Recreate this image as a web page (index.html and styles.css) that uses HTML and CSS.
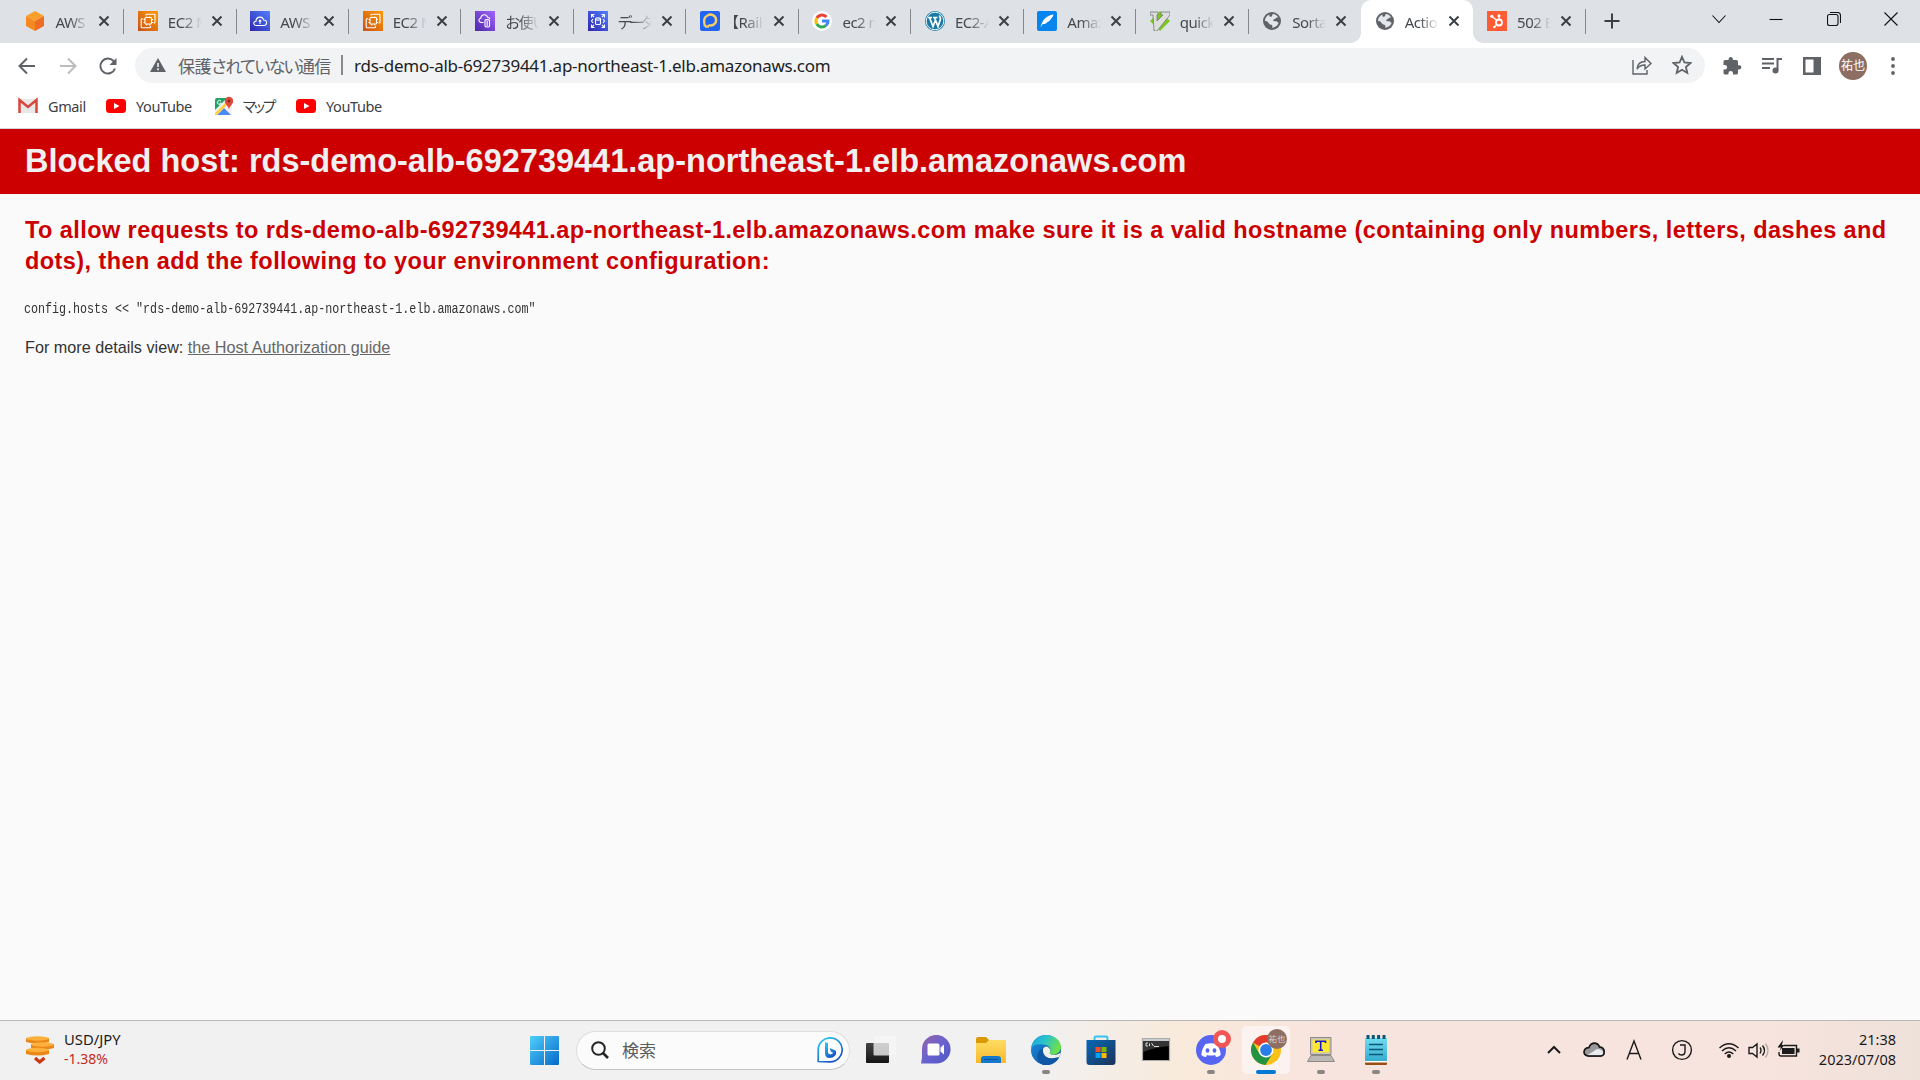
FILE: index.html
```html
<!DOCTYPE html>
<html lang="ja">
<head>
<meta charset="utf-8">
<title>Action Controller: Exception caught</title>
<link rel="stylesheet" href="styles.css">
</head>
<body>
<svg class="defs" aria-hidden="true">
  <defs>
    <linearGradient id="orange" x1="0" y1="1" x2="1" y2="0"><stop offset="0" stop-color="#c8511b"/><stop offset="1" stop-color="#f90"/></linearGradient>
    <linearGradient id="blue" x1="0" y1="1" x2="1" y2="0"><stop offset="0" stop-color="#2e27ad"/><stop offset="1" stop-color="#527fff"/></linearGradient>
    <linearGradient id="purple" x1="0" y1="1" x2="1" y2="0"><stop offset="0" stop-color="#4d27a8"/><stop offset="1" stop-color="#a166ff"/></linearGradient>
    <linearGradient id="win" x1="0" y1="0" x2="1" y2="1"><stop offset="0" stop-color="#4fd0fb"/><stop offset="1" stop-color="#0669c9"/></linearGradient>
    <linearGradient id="chat" x1="0" y1="0" x2="1" y2="1"><stop offset="0" stop-color="#9a64a8"/><stop offset=".5" stop-color="#6a62cf"/><stop offset="1" stop-color="#4d57c4"/></linearGradient>
    <linearGradient id="folder" x1="0" y1="0" x2="0" y2="1"><stop offset="0" stop-color="#ffdc62"/><stop offset="1" stop-color="#f8b92e"/></linearGradient>
    <linearGradient id="edgeA" x1="0" y1="0" x2="1" y2=".4"><stop offset="0" stop-color="#1b9de2"/><stop offset=".5" stop-color="#2cc3c9"/><stop offset="1" stop-color="#6be04b"/></linearGradient>
    <linearGradient id="edgeB" x1="0" y1="0" x2="1" y2="1"><stop offset="0" stop-color="#1a8fe0"/><stop offset="1" stop-color="#0c4f9c"/></linearGradient>
    <linearGradient id="store" x1="0" y1="0" x2="1" y2="1"><stop offset="0" stop-color="#0669b5"/><stop offset="1" stop-color="#1d3258"/></linearGradient>
    <linearGradient id="bing" x1="0" y1="0" x2=".6" y2="1"><stop offset="0" stop-color="#28d3f3"/><stop offset="1" stop-color="#1851c8"/></linearGradient>
    <linearGradient id="pad" x1="0" y1="0" x2="0" y2="1"><stop offset="0" stop-color="#6fdcf0"/><stop offset="1" stop-color="#37acd0"/></linearGradient>
    <linearGradient id="dark" x1="0" y1="0" x2="0" y2="1"><stop offset="0" stop-color="#444"/><stop offset="1" stop-color="#151515"/></linearGradient>
    <symbol id="ec2" viewBox="0 0 20 20"><path fill="url(#orange)" d="M0 0h20v20H0z"/><g fill="none" stroke="#fff" stroke-width="1.1"><rect x="7" y="6.500" width="6.500" height="6.500" rx=".8"/><path d="M8 4.500V4q0-.8.800-.8h7.400q.8 0 .8.800v7.200q0 .8-.8.800H15.500M12.500 15v1q0 .8-.8.800H4q-.8 0-.8-.8V8.600q0-.8.800-.8h1M8.700 6.500v-1M11.700 6.500v-1M8.700 13v1.500M11.700 13v1.500M7 8.500H5.500M7 11.500H5.500M13.500 8.500H15M13.500 11.500H15"/></g></symbol>
    <symbol id="globe" viewBox="0 0 20 20"><circle cx="10" cy="10" r="9" fill="#5f6368"/><path fill="#e4e6ea" d="M10.500 3.100c2.600.1 4.700 1.600 5.800 3.700-1.300-.5-2.100 0-3 .9-.7.600-1.900.4-2.100 1.500.3 1.300 1.900.9 3 1.100 1.500.3 1.100 1.500 2.500 1.400-1 2.800-3.600 4.900-6.700 5 .3-.7.500-1.300.4-2-.4-1.100-1.700-.9-2.700-1.500C6.400 12 6 10.800 4.800 10.300c-.7-.3-1.300-.4-1.900-.4C3 6.900 4.900 4.400 7.500 3.500c-.2 1.100-.2 2 .8 2.300 1.100.2 1.400-.6 1.900-1.400.2-.4.300-.8.300-1.300z"/></symbol>
    <symbol id="close" viewBox="0 0 12 12"><path d="M1.500 1.500l9 9M10.500 1.500l-9 9" stroke="#3c4043" stroke-width="2" fill="none"/></symbol>
    <symbol id="yt" viewBox="0 0 20 14"><rect width="20" height="14" rx="3.500" fill="red"/><path d="M8 4l5.500 3L8 10z" fill="#fff"/></symbol>
  </defs>
</svg>

<div class="tabs">
  <div class="tab"><svg class="fav" viewBox="0 0 20 20"><path fill="#f9a02c" d="M10 0l9 5-9 5-9-5z"/><path fill="#f68a20" d="M1 5l9 5v10l-9-5z"/><path fill="#ef6c26" d="M19 5l-9 5v10l9-5z"/></svg><span class="title">AWS</span><svg class="x"><use href="#close"/></svg></div>
  <div class="tab"><svg class="fav"><use href="#ec2"/></svg><span class="title">EC2 M</span><svg class="x"><use href="#close"/></svg></div>
  <div class="tab"><svg class="fav" viewBox="0 0 20 20"><path fill="url(#blue)" d="M0 0h20v20H0z"/><path d="M6.500 14.500C3 14.500 3 10.500 6 10.300 6 5.500 12.500 4.500 13.500 9c4-.3 4 5.500.5 5.500zM10 13v-3.500M8.700 10.500L10 9l1.300 1.500" fill="none" stroke="#fff" stroke-width="1.100"/></svg><span class="title">AWS</span><svg class="x"><use href="#close"/></svg></div>
  <div class="tab"><svg class="fav"><use href="#ec2"/></svg><span class="title">EC2 M</span><svg class="x"><use href="#close"/></svg></div>
  <div class="tab"><svg class="fav" viewBox="0 0 20 20"><path fill="url(#purple)" d="M0 0h20v20H0z"/><path d="M8.500 11.500H6c-3-.5-2.500-4-.2-4.300C6 3 11.500 2.500 12.500 6.200c1.500 0 2.300.8 2.500 1.800M10 9.500v5.500c0 1.300 4.500 1.300 4.500 0V9.500c0-1.200-4.500-1.200-4.500 0M12.200 10v5" fill="none" stroke="#fff" stroke-width="1.100"/></svg><span class="title kana">お使い</span><svg class="x"><use href="#close"/></svg></div>
  <div class="tab"><svg class="fav" viewBox="0 0 20 20"><path fill="url(#blue)" d="M0 0h20v20H0z"/><g fill="none" stroke="#fff" stroke-width="1.100"><path d="M3.500 6.500v-3h3M3.500 3.500L6 6M13.500 3.500h3v3M16.500 3.500L14 6M3.500 13.500v3h3M3.500 16.500L6 14M16.500 13.500v3h-3M16.500 16.500L14 14M5 8l-1.500 2L5 12M15 8l1.500 2L15 12"/><ellipse cx="10" cy="8" rx="2.500" ry="1.100"/><path d="M7.500 8v4.500c0 1.400 5 1.400 5 0V8"/></g></svg><span class="title katakana">データ</span><svg class="x"><use href="#close"/></svg></div>
  <div class="tab"><svg class="fav" viewBox="0 0 20 20"><rect width="20" height="20" rx="2" fill="#2264f2"/><path d="M5 15.500c-1.500-5-1-9.500 2.500-11A5.500 5.500 0 1 1 8.300 14M5 15.500h4" fill="none" stroke="#f5cf66" stroke-width="2.400"/></svg><span class="title"><span class="bracket">【</span>Rails</span><svg class="x"><use href="#close"/></svg></div>
  <div class="tab"><svg class="fav" viewBox="0 0 20 20"><circle cx="10" cy="10" r="10" fill="#fff"/><g fill="none" stroke-width="3"><path stroke="#ea4335" d="M4.800 7A6 6 0 0 1 14.500 6"/><path stroke="#fbbc05" d="M4.800 7a6 6 0 0 0 0 6"/><path stroke="#34a853" d="M4.800 13a6 6 0 0 0 9 1.700"/><path stroke="#4285f4" d="M10 10h6a6 6 0 0 1-2.200 4.700"/></g></svg><span class="title">ec2 m</span><svg class="x"><use href="#close"/></svg></div>
  <div class="tab"><svg class="fav" viewBox="0 0 20 20"><circle cx="10" cy="10" r="10" fill="#187aa5"/><circle cx="10" cy="10" r="8.800" fill="none" stroke="#fff" stroke-width=".9"/><path d="M3 6.500h4M8 6.500h4.500M4.500 6.500l3.500 9L10.500 9M9.500 6.500l3.500 9 2.500-7.500c.2-1.500-1-2-1-3.500" fill="none" stroke="#fff" stroke-width="1.700"/></svg><span class="title">EC2-A</span><svg class="x"><use href="#close"/></svg></div>
  <div class="tab"><svg class="fav" viewBox="0 0 20 20"><rect width="20" height="20" rx="2" fill="#0785ee"/><path d="M3.500 16.500C5 9.500 9 4.500 16.500 3.500c-.5 2-1.300 3-2.500 4l.3.300c-1.300 1.800-2.800 2.900-4.500 3.500l.3.400c-2 1.300-3.600 1.200-4.600 1.500z" fill="#fff"/></svg><span class="title">Amaz</span><svg class="x"><use href="#close"/></svg></div>
  <div class="tab"><svg class="fav" viewBox="0 0 20 20"><path d="M10 0l10 10-10 10L0 10z" fill="#7bc91f"/><path d="M0 1h8v3H7v6l6-6h-2V1h9v3L7 20H4L3 4H0z" fill="#ddd" stroke="#777" stroke-width=".8"/></svg><span class="title">quick</span><svg class="x"><use href="#close"/></svg></div>
  <div class="tab no-line"><svg class="fav"><use href="#globe"/></svg><span class="title">Sorta</span><svg class="x"><use href="#close"/></svg></div>
  <div class="tab active"><svg class="fav"><use href="#globe"/></svg><span class="title">Actio</span><svg class="x"><use href="#close"/></svg></div>
  <div class="tab"><svg class="fav" viewBox="0 0 20 20"><path fill="#ff5c35" d="M0 0h20v20H0z"/><g fill="none" stroke="#fff"><circle cx="12" cy="11.500" r="3" stroke-width="1.800"/><path stroke-width="1.300" d="M12 8.500V5M9.700 9.300L5 5.500M9.700 13.800L7.500 16"/></g><g fill="#fff"><circle cx="12" cy="4.800" r="1.500"/><circle cx="4.800" cy="5.200" r="1.500"/><circle cx="7.300" cy="16" r="1.200"/></g></svg><span class="title">502 B</span><svg class="x"><use href="#close"/></svg></div>
  <svg class="plus" viewBox="0 0 16 16"><path d="M8 .5v15M.5 8h15" stroke="#3c4043" stroke-width="2"/></svg>
  <div class="window-buttons">
    <svg viewBox="0 0 14 14"><path d="M.5 3.500L7 10.500l6.500-7"/></svg>
    <svg viewBox="0 0 14 14"><path d="M.5 7.500h13"/></svg>
    <svg viewBox="0 0 14 14"><rect x=".5" y="2.500" width="10.500" height="11" rx="2"/><path d="M3 .5h7.500q3 0 3 3V11"/></svg>
    <svg viewBox="0 0 14 14"><path d="M.5.500l13 13M13.500.5l-13 13"/></svg>
  </div>
</div>

<div class="toolbar">
  <svg class="nav" viewBox="0 0 20 20"><path d="M18 10H3M10 2.500L2.500 10l7.500 7.500"/></svg>
  <svg class="nav off" viewBox="0 0 20 20"><path d="M2 10h15M10 2.500l7.500 7.500-7.500 7.500"/></svg>
  <svg class="nav" viewBox="0 0 20 20"><path d="M17 12.500A7.500 7.500 0 1 1 15.500 5l1.500 2"/><path d="M18.500 2v7h-7z" fill="#5f6368" stroke="none"/></svg>
  <div class="omnibox">
    <svg class="warn" viewBox="0 0 16 14"><path d="M8 0l8 14H0z" fill="#5f6368"/><path d="M8 5v4M8 10.300v2" stroke="#f1f3f4" stroke-width="1.600"/></svg>
    <span class="insecure">保護<span class="tight">されていない</span>通信</span>
    <span class="bar"></span>
    <span class="url">rds-demo-alb-692739441.ap-northeast-1.elb.amazonaws.com</span>
    <svg class="share" viewBox="0 0 20 20"><path d="M1 5v14h14v-4M5 14c.5-5 3-7.500 8-7.500v-4l6 6-6 5.500v-4c-4 0-6 1-8 4z" fill="none" stroke="#5f6368" stroke-width="1.400"/></svg>
    <svg class="star" viewBox="0 0 20 20"><path d="M10 1.800l2.400 5.700 6.100.5-4.600 4 1.400 6-5.300-3.200L4.700 18l1.400-6-4.600-4 6.100-.5z" fill="none" stroke="#5f6368" stroke-width="1.800"/></svg>
  </div>
  <div class="actions">
    <svg viewBox="0 0 20 20"><path d="M17.300 9.200H16V5.700q0-1.600-1.600-1.600h-3.500V2.800a2.200 2.200 0 0 0-4.300 0v1.300H3.100q-1.600 0-1.600 1.600V9h1.300a2.300 2.300 0 0 1 0 4.600H1.500v3.300q0 1.600 1.600 1.600h3.300v-1.300a2.300 2.300 0 0 1 4.600 0v1.300h3.400q1.600 0 1.600-1.600v-3.500h1.300a2.100 2.100 0 0 0 0-4.200z" fill="#5f6368"/></svg>
    <svg viewBox="0 0 20 20"><path d="M0 3h12M0 7.500h12M0 12h8M15.500 14V3H20" fill="none" stroke="#5f6368" stroke-width="2"/><circle cx="13.500" cy="14.500" r="3" fill="#5f6368"/></svg>
    <svg viewBox="0 0 20 20"><path d="M1 1h18v18H1zM3.500 3.500v13h8v-13z" fill="#5f6368" fill-rule="evenodd"/></svg>
    <span class="avatar">祐也</span>
    <svg viewBox="0 0 20 20"><g fill="#5f6368"><circle cx="9" cy="3" r="1.900"/><circle cx="9" cy="10" r="1.900"/><circle cx="9" cy="17" r="1.900"/></g></svg>
  </div>
</div>

<div class="bookmarks">
  <svg viewBox="0 0 20 16"><path fill="#e8e8e8" d="M1 1h18v14H1z"/><path d="M1.500 15V2L10 9l8.500-7v13" fill="none" stroke="#d9463b" stroke-width="2.500"/></svg><span class="gmail">Gmail</span>
  <svg viewBox="0 0 20 14"><use href="#yt"/></svg><span class="youtube">YouTube</span>
  <svg viewBox="0 0 20 20"><rect x="1" y="2" width="17" height="17" rx="2" fill="#f2f2f2"/><path d="M1 4q0-2 2-2h10L1 14z" fill="#1fa463"/><path d="M3 19l7-7 7 7z" fill="#4a8af4"/><path d="M1 17L14 4l2 2L3 19H1z" fill="#fdd047"/><path d="M15 14c0-4-4.200-5-4.200-9a4.200 4.200 0 0 1 8.400 0c0 4-4.200 5-4.200 9z" fill="#dc4b3e"/><circle cx="15" cy="5" r="1.500" fill="#8e2a22"/><path d="M7 5.200a2 2 0 1 0 .3 2H5.500" stroke="#fff" fill="none"/></svg><span class="maps">マップ</span>
  <svg viewBox="0 0 20 14"><use href="#yt"/></svg><span class="youtube">YouTube</span>
</div>

<main class="page">
  <header><h1>Blocked host: rds-demo-alb-692739441.ap-northeast-1.elb.amazonaws.com</h1></header>
  <div class="content">
    <h2>To allow requests to rds-demo-alb-692739441.ap-northeast-1.elb.amazonaws.com make sure it is a valid hostname (containing only numbers, letters, dashes and<br>dots), then add the following to your environment configuration:</h2>
    <pre>config.hosts &lt;&lt; "rds-demo-alb-692739441.ap-northeast-1.elb.amazonaws.com"</pre>
    <p>For more details view: <a href="#">the Host Authorization guide</a></p>
  </div>
</main>

<footer class="taskbar">
  <div class="widget">
    <svg viewBox="0 0 28 28"><g fill="#e98718"><path d="M0 14h23v4q-11 3-23 0z"/><path d="M5 8h23v4q-11 3-23 0z"/><path d="M0 2h23v4q-11 3-23 0z"/></g><g fill="#fdb03b"><ellipse cx="11.500" cy="14" rx="11.500" ry="2.200"/><ellipse cx="16.500" cy="8.500" rx="11.500" ry="2.200"/><ellipse cx="11.500" cy="2.500" rx="11.500" ry="2.200"/></g><path d="M9 22l4.700 4 4.800-4" fill="none" stroke="#c73a14" stroke-width="3.200"/></svg>
    <div><span>USD/JPY</span><span class="down">-1.38%</span></div>
  </div>
  <svg class="start" viewBox="0 0 29 29"><path fill="url(#win)" d="M0 1q0-1 1-1h13v14H0zM15 0h13q1 0 1 1v13H15zM0 15h14v14H1q-1 0-1-1zM15 15h14v13q0 1-1 1H15z"/></svg>
  <div class="search">
    <svg class="lens" viewBox="0 0 18 18"><circle cx="7.500" cy="7.500" r="6.300"/><path d="M12 12l5 5" stroke-width="2.600"/></svg><span>検索</span>
    <svg class="bing" viewBox="0 0 26 26"><path d="M1.200 24.500V13A12 12 0 1 1 13 24.800z" fill="none" stroke="url(#bing)" stroke-width="1.700"/><path d="M8 5l3 1.200v10l2.500 1.300 3-1.500-2.500-1.200L12.500 11l6 2.500c2.500 4-2 7.500-6 7.500-3 0-4.500-2-4.500-4.500z" fill="url(#bing)"/></svg>
  </div>
  <div class="apps">
    <div class="app"><svg viewBox="0 0 30 30"><rect y="8" width="23" height="20" rx="1" fill="url(#dark)"/><rect x="7.500" y=".5" width="22.500" height="20" rx="1" fill="#f6f6f6" opacity=".78"/></svg></div>
    <div class="app"><svg viewBox="0 0 30 30"><path d="M0 28.500l1-6V14.300A14.300 14.300 0 1 1 15 28.500z" fill="url(#chat)"/><rect x="6.500" y="8.500" width="12" height="12" rx="1.500" fill="#fff"/><path d="M19.500 12.500l3.500-3v10l-3.500-3z" fill="#fff"/></svg></div>
    <div class="app"><svg viewBox="0 0 30 30"><path d="M0 10V4q0-2 2-2h8l3 3v5z" fill="#d99a05"/><path d="M0 8h10l3-3h17v23H0z" fill="url(#folder)"/><path d="M5 28v-4q0-3 3-3h14q3 0 3 3v4z" fill="#1479cc"/><path d="M8 24.500h14" stroke="#07569c"/></svg></div>
    <div class="app run"><svg viewBox="0 0 30 30"><circle cx="15" cy="15" r="15" fill="url(#edgeB)"/><path d="M0 14C1 5 7 0 15 0c9 0 15 6 15 12 0 5-4 7.500-8 7.500-3 0-4-1-3-2.500 1-2 .5-6-4-7C9 8.500 2 9 0 14z" fill="url(#edgeA)"/><path d="M15 11.500c-3 1-4 3.500-3.500 6 1 5 7 7 12 5.500 2-.7 4-1 4.500-.5l2-5c-2.500 2-5 2.500-8 2.300-3-.3-4-1.300-3-2.800 1-2-.5-5-4-5.500z" fill="#f3efe9"/><path d="M12 30C5 27 5 19 9 15c1-1 2-1.500 3-1.500-1 8 6 12 16 9-3 6-9 8.500-16 7.500z" fill="#1057a5"/></svg></div>
    <div class="app"><svg viewBox="0 0 30 30"><path d="M8.500 6V3q0-1.500 1.500-1.500h10q1.500 0 1.500 1.500v3" fill="none" stroke="#38c2f1" stroke-width="2"/><path d="M.5 5h29v22q0 3-3 3h-23q-3 0-3-3z" fill="url(#store)"/><path fill="#f25022" d="M9.500 12h5v5h-5z"/><path fill="#7fba00" d="M15.500 12h5v5h-5z"/><path fill="#00a4ef" d="M9.500 18h5v5h-5z"/><path fill="#ffb900" d="M15.500 18h5v5h-5z"/></svg></div>
    <div class="app"><svg viewBox="0 0 30 30"><path d="M1.500 3.500h27v22h-27z" fill="#000" stroke="#aaa" stroke-width="1.200"/><path d="M2 4h26v2H2z" fill="#c9ccd0"/><path d="M2 6h26v5Q15 12 2 17z" fill="#343434"/><path d="M7 8H5v3h2M8.500 8.500v2.500M10.500 8l2 3M13 11.500h5" stroke="#ddd" fill="none"/></svg></div>
    <div class="app run"><svg viewBox="0 0 30 30"><circle cx="15" cy="15" r="15" fill="#5865f2"/><path d="M9.500 9q5.500-1.500 11 0 4 5.500 4.200 11-2 1.800-4.700 2l-1-2q-4 1-8 0l-1 2q-2.700-.2-4.700-2 .2-5.500 4.200-11z" fill="#fff"/><ellipse cx="11.500" cy="15.500" rx="1.900" ry="2.200" fill="#5865f2"/><ellipse cx="18.500" cy="15.500" rx="1.900" ry="2.200" fill="#5865f2"/></svg><span class="alert"></span></div>
    <div class="app run current"><svg viewBox="0 0 30 30"><circle cx="15" cy="15" r="15" fill="#fbc116"/><path d="M15 15L2 7.500A15 15 0 0 1 28 7.500H15z" fill="#e33b2e"/><path d="M2 7.500A15 15 0 0 0 14.500 30L21.500 18.700 8.500 18.700z" fill="#229342"/><circle cx="15" cy="15" r="7.500" fill="#fff"/><circle cx="15" cy="15" r="5.900" fill="#2b7de9"/></svg><span class="mini-avatar">祐也</span></div>
    <div class="app run"><svg viewBox="0 0 30 30"><path d="M4.500 2.500h20.500v17H4.500z" fill="#c8c4c2" stroke="#8e8a88"/><path d="M6.500 4.500h16.500v13H6.500z" fill="#ffe930"/><path d="M10 8V6.300h9.500V8M14.700 6.300v9M12.500 15.300h4.500" stroke="#1717d6" stroke-width="1.600" fill="none"/><path d="M5 20.500h20l3.500 6H1.500z" fill="#bab7b5" stroke="#8e8a88"/></svg></div>
    <div class="app run"><svg viewBox="0 0 30 30"><path d="M4 27h22v2q0 1-1 1H5q-1 0-1-1z" fill="#9b4b14"/><path d="M4 25h22v2.500H4z" fill="#fff"/><path d="M4 4q0-1 1-1h20q1 0 1 1v22H4z" fill="url(#pad)"/><path d="M8 9.500h14M8 14.500h14M8 19.500h14" stroke="#0d5675" stroke-width="1.700"/><path d="M7 0v4M12.300 0v4M17.600 0v4M23 0v4" stroke="#0d5675" stroke-width="3"/></svg></div>
  </div>
  <div class="tray">
    <svg class="w40" viewBox="0 0 40 24"><path d="M14 15l6-6 6 6" stroke-width="2"/></svg>
    <svg class="w40" viewBox="0 0 40 24"><path d="M15 18c-7-.5-6-8 0-8.500 2-6 9-5 10.500-.5 6 .5 6 8.500 1 9z" fill="#999"/><path d="M13 17.500L23 11q5 0 6.500 4-.5 2.500-3 2.500z" fill="#e8eaf0" stroke="none"/><path d="M15 18c-7-.5-6-8 0-8.500 2-6 9-5 10.500-.5 6 .5 6 8.500 1 9z" /></svg>
    <svg class="w40" viewBox="0 0 40 24"><path d="M13 21.500L20 3l7 18.500M15.500 15.500h9"/></svg>
    <svg class="w40 j" viewBox="0 0 40 24"><circle cx="20" cy="12" r="9.400"/><path d="M18 7h5v6.500q0 3.500-3.500 3.500-2 0-3-1.500"/></svg>
    <svg class="w28" viewBox="0 0 28 24"><path d="M4.500 10q9.500-8.500 19 0M7 13q7-6.500 14 0M9.700 16q4.300-4 8.600 0"/><circle cx="14" cy="18" r="1.300" fill="#222"/></svg>
    <svg class="w28" viewBox="0 0 28 24"><path d="M5 9.500h3.500L13 6v13l-4.500-3.500H5zM16 9.500q2 2.500 0 6M18.500 7.500q4 5 0 10"/><path d="M21.500 5.500q5 7 0 14" stroke="#b9aca8"/></svg>
    <svg class="w28 bat" viewBox="0 0 28 24"><path d="M10 7.500h12.500V18H7q-2 0-2-2v-2"/><path d="M8 10h12.500v6H8zM23 10.500h2.500v4H23zM9 2L3.500 9.500H7L5.500 13l5-6H8z" fill="#1b1b1b" stroke="none"/></svg>
  </div>
  <div class="clock"><span>21:38</span><span>2023/07/08</span></div>
</footer>
</body>
</html>
```
FILE: styles.css
```css
* { box-sizing: border-box; }
body { margin: 0; width: 1920px; height: 1080px; overflow: hidden; display: flex; flex-direction: column; font-family: "Noto Sans", "Noto Sans CJK JP", sans-serif; background: #fff; }
svg { display: block; flex: none; }
.defs { position: absolute; width: 0; height: 0; }

.tabs { flex: none; display: flex; height: 43px; padding-left: 11.400px; background: #dee1e6; }
.tab { position: relative; flex: none; width: 112.440px; height: 43px; padding: 0 0 1px 14px; display: flex; align-items: center; }
.tab::after { content: ""; position: absolute; right: -.3px; top: 9px; width: 1px; height: 25px; background: #85888d; }
.tab.no-line::after { display: none; }
.fav { width: 20px; height: 20px; }
.title { width: 43px; margin-left: 10px; white-space: nowrap; font-size: 15px; letter-spacing: -.5px; line-height: 24px; padding-top: 1px; color: #45494d; -webkit-mask-image: linear-gradient(90deg, #000 14px, transparent 34px); mask-image: linear-gradient(90deg, #000 14px, transparent 34px); }
.title.kana { letter-spacing: -1.500px; }
.title.katakana { letter-spacing: -3.800px; }
.bracket { margin-left: -6px; }
.x { width: 12px; height: 12px; }
.active { background: #fff; border-radius: 10px 10px 0 0; }
.active::after, .active::before { content: ""; position: absolute; top: auto; bottom: 0; width: 10px; height: 10px; }
.active::before { left: -10px; background: radial-gradient(circle at 0 0, #dee1e6 9.500px, #fff 10px); }
.active::after { right: -10px; background: radial-gradient(circle at 100% 0, #dee1e6 9.500px, #fff 10px); }
.plus { width: 16px; height: 16px; margin: 13px 0 0 18px; }
.window-buttons { display: flex; gap: 43.400px; margin: 12px 22px 0 auto; }
.window-buttons svg { width: 14px; height: 14px; fill: none; stroke: #111; stroke-width: 1.100; }

.toolbar { flex: none; display: flex; align-items: center; height: 44px; padding: 1px 0 0 17px; }
.nav { width: 20px; height: 20px; margin-right: 20.500px; fill: none; stroke: #5f6368; stroke-width: 2; }
.nav.off { stroke: #babcbe; }
.nav:nth-child(3) { margin-right: 17px; }
.omnibox { display: flex; align-items: center; width: 1570px; height: 35px; padding: 0 13px 1px 15px; border-radius: 18px; background: #f1f3f4; font-size: 17px; white-space: nowrap; }
.warn { width: 16px; height: 14px; }
.insecure { width: 153px; margin-left: 12px; letter-spacing: -.6px; color: #5f6368; }
.tight { letter-spacing: -2.400px; }
.bar { width: 2px; height: 20px; margin: 0 11px 0 10px; background: #85888c; }
.url { letter-spacing: -.25px; color: #202124; }
.share { width: 20px; height: 20px; margin-left: auto; }
.star { width: 20px; height: 20px; margin-left: 20px; }
.actions { display: flex; align-items: center; gap: 20px; margin-left: 17px; }
.actions svg { width: 20px; height: 20px; }
.avatar { width: 28px; height: 28px; margin: 0 -3px; border-radius: 50%; background: #8d6e63; color: #fff; font-size: 12px; line-height: 28px; text-align: center; }

.bookmarks { flex: none; display: flex; align-items: center; height: 42px; padding: 0 0 3px 18px; border-bottom: 1px solid #d5d7da; font-size: 14.500px; line-height: 20px; color: #3c4043; white-space: nowrap; }
.bookmarks svg { width: 20px; height: 20px; margin-right: 10px; }
.bookmarks span { padding-bottom: 1px; letter-spacing: -.4px; }
.gmail { width: 58px; }
.youtube { width: 78px; }
.bookmarks .maps { width: 54px; margin-left: -2px; letter-spacing: -4.500px; }

.page { flex: 1; background: #fafafa; color: #333; font-family: "Liberation Sans", Arial, sans-serif; }
.page header { height: 65px; padding: 0 25px; background: #c00; color: #f0f0f0; }
h1 { margin: 0; font-size: 32.500px; line-height: 65px; white-space: nowrap; }
.content { padding: 21px 25px; }
h2 { margin: 0; font-size: 23.500px; letter-spacing: .42px; line-height: 31px; color: #c00; white-space: nowrap; }
pre { width: max-content; margin: 22px 0 0 -1px; font: 14px/20px "Liberation Mono", monospace; transform: scaleX(.834); transform-origin: 0 50%; }
p { margin: 18px 0 0; font-size: 16.200px; line-height: 20px; }
a { color: #666; }

.taskbar { flex: none; display: flex; align-items: center; height: 60px; padding-bottom: 1px; border-top: 1px solid #b9b8b7; background: linear-gradient(90deg, #f1f1f1 0, #f1f1f1 1040px, #f8eadb 1180px, #f8e4de 1330px, #f8e4de 1750px, #eee1da 1920px); font-size: 14.500px; color: #1b1b1b; }
.widget { width: 504px; margin-left: 26px; display: flex; align-items: center; }
.widget svg { width: 28px; height: 28px; margin-right: 10px; }
.widget div { font-size: 14.800px; padding-bottom: 2px; }
.widget span, .clock span { display: block; line-height: 20px; }
.widget .down { color: #c42b1c; font-size: 14px; }
.start { width: 29px; height: 29px; }
.search { width: 274px; height: 39px; margin-left: 17px; padding: 0 6px 0 14px; display: flex; align-items: center; border: 1px solid #dedede; border-bottom-color: #c4c4c4; border-radius: 20px; background: #fbfbfb; font-size: 17px; color: #5c5c5c; }
.search span { padding-bottom: 1px; }
.lens { width: 18px; height: 18px; margin-right: 13px; fill: none; stroke: #262626; stroke-width: 2; }
.bing { width: 26px; height: 26px; margin-left: auto; }
.apps { display: flex; margin-left: 7px; gap: 7px; }
.app { position: relative; width: 48px; height: 48px; padding: 9px; border-radius: 5px; }
.app svg { width: 30px; height: 30px; }
.app.run::after { content: ""; position: absolute; left: 20px; bottom: 0; width: 8px; height: 4px; border-radius: 2px; background: #8a8482; }
.app.current { background: #fcf3f1; }
.app.current::after { left: 14px; width: 20px; background: #0078d4; }
.alert, .mini-avatar { position: absolute; border-radius: 50%; }
.alert { left: 26px; top: 4px; width: 18px; height: 18px; border: 5px solid #f05656; background: #fff; }
.mini-avatar { left: 25px; top: 3px; width: 20px; height: 20px; background: #8d6e63; color: #d8cbc6; font-size: 8.500px; line-height: 20px; text-align: center; }
.tray { display: flex; margin-left: 134px; }
.tray svg { height: 24px; fill: none; stroke: #1b1b1b; stroke-width: 1.400; }
.w40 { width: 40px; }
.w28 { width: 28px; margin-right: 1px; }
.tray .j { margin: 0 13px 0 8px; }
.tray .bat { margin-left: 1px; }
.clock { margin: 0 24px 0 auto; padding-bottom: 3px; text-align: right; }
```
